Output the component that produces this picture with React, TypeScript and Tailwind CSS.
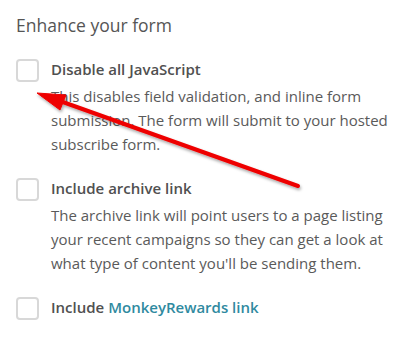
type Option = {
  id: string;
  label: React.ReactNode;
  description?: string;
};

const options: Option[] = [
  {
    id: "disable-js",
    label: "Disable all JavaScript",
    description:
      "This disables field validation, and inline form submission. The form will submit to your hosted subscribe form.",
  },
  {
    id: "archive-link",
    label: "Include archive link",
    description:
      "The archive link will point users to a page listing your recent campaigns so they can get a look at what type of content you'll be sending them.",
  },
  {
    id: "rewards-link",
    label: (
      <>
        Include{" "}
        <a href="#" className="text-[#2f8aa0]">
          MonkeyRewards link
        </a>
      </>
    ),
  },
];

function OptionRow({ option }: { option: Option }) {
  return (
    <div className="flex gap-3">
      <span className="mt-[2px] h-[23px] w-[23px] shrink-0 rounded-[4px] border-2 border-[#d8d8d8] bg-white" />
      <div className="flex flex-col">
        <label htmlFor={option.id} className="text-[15px] leading-[24px] font-semibold text-[#505050]">
          {option.label}
        </label>
        {option.description && (
          <p className="mt-[3px] text-[15px] leading-[24px] text-[#5a5a5a]">
            {option.description}
          </p>
        )}
      </div>
    </div>
  );
}

export default function App() {
  return (
    <div className="relative h-[360px] w-[406px] overflow-hidden bg-white font-['Open_Sans',sans-serif]">
      <section className="flex flex-col pl-4 pr-3 pt-[13px]">
        <h2 className="text-[17.5px] leading-[24px] text-[#555]">Enhance your form</h2>
        <div className="mt-[20px] flex flex-col gap-5">
          {options.map((option) => (
            <OptionRow key={option.id} option={option} />
          ))}
        </div>
      </section>

      {/* annotation arrow */}
      <svg className="absolute inset-0 pointer-events-none" width="406" height="360" viewBox="0 0 406 360">
        <defs>
          <filter id="shadow" x="-10%" y="-10%" width="120%" height="140%">
            <feDropShadow dx="1" dy="2" stdDeviation="1.5" floodColor="#000" floodOpacity="0.35" />
          </filter>
        </defs>
        <g filter="url(#shadow)" fill="#ee0000" stroke="#ee0000">
          <line x1="298" y1="186" x2="60" y2="101" strokeWidth="4" strokeLinecap="round" />
          <polygon points="37,93 66,95 60,110" strokeWidth="1" strokeLinejoin="round" />
        </g>
      </svg>
    </div>
  );
}
